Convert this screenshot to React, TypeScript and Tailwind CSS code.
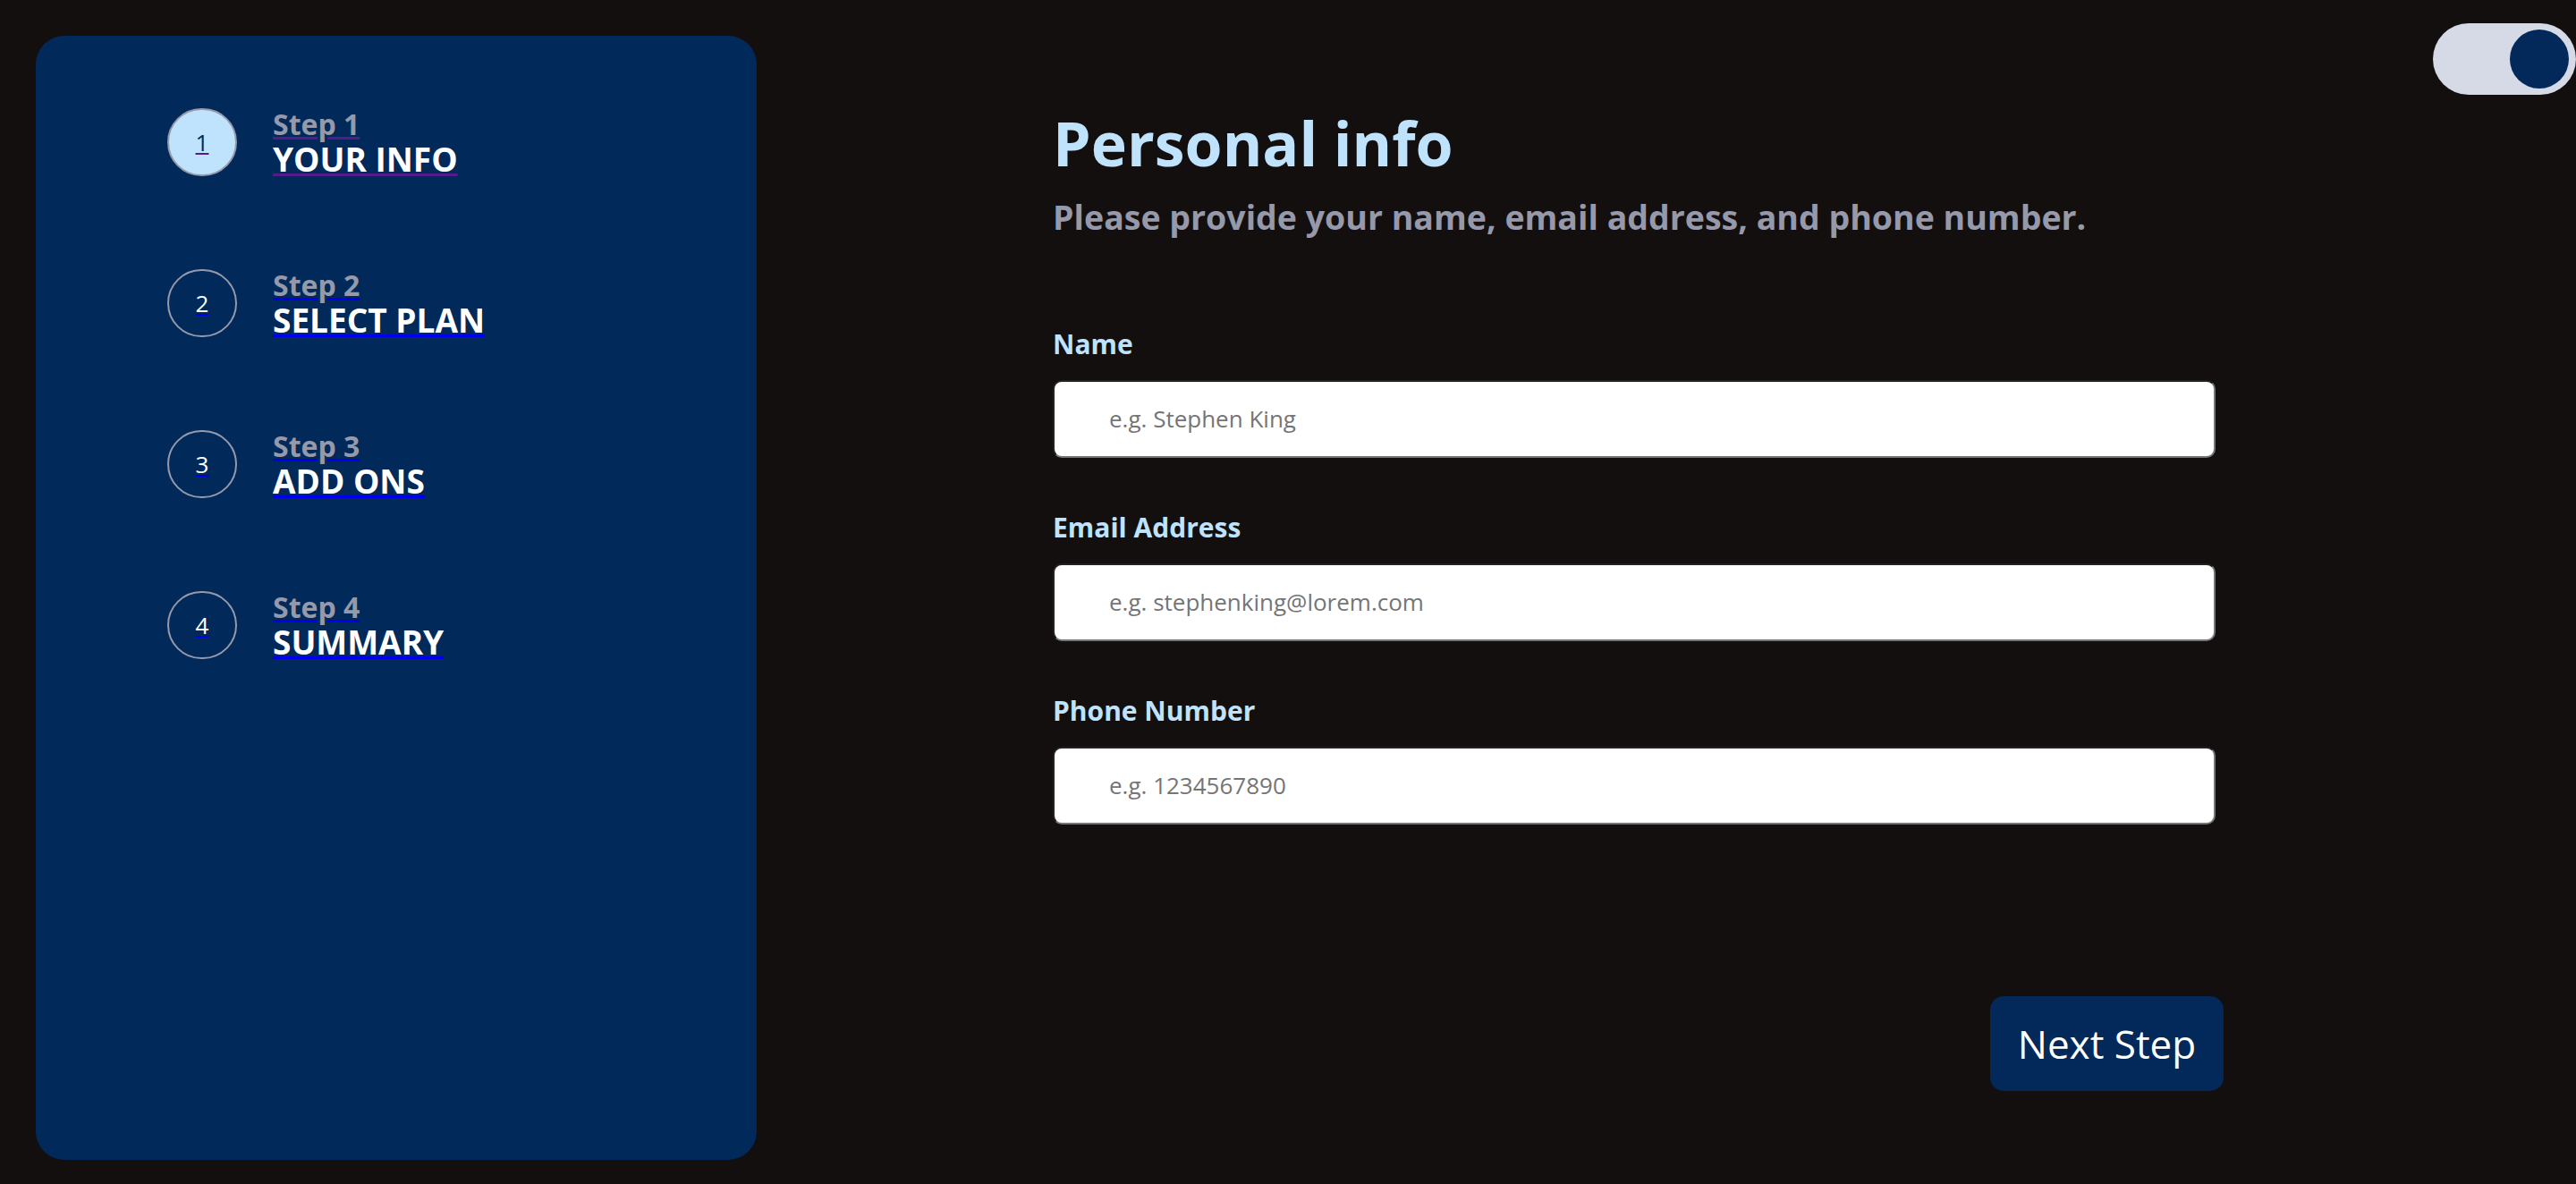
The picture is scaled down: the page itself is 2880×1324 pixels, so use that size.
import React from "react";

const steps = [
  { n: 1, label: "Step 1", title: "YOUR INFO", active: true },
  { n: 2, label: "Step 2", title: "SELECT PLAN", active: false },
  { n: 3, label: "Step 3", title: "ADD ONS", active: false },
  { n: 4, label: "Step 4", title: "SUMMARY", active: false },
];

function Field({ label, placeholder, type }: { label: string; placeholder: string; type: string }) {
  return (
    <div className="flex flex-col">
      <label className="text-[30px] leading-none font-bold text-[#bfe2fd]">{label}</label>
      <input
        type={type}
        placeholder={placeholder}
        className="mt-[25px] w-[1300px] h-[87px] rounded-[10px] bg-white border-2 border-[#767676] [border-style:inset] pl-[61px] text-[26px] text-black placeholder:text-[#757575] outline-none"
      />
    </div>
  );
}

export default function App() {
  return (
    <div
      className="relative h-[1324px] w-full bg-[#130f0f] flex pl-[40px] pt-[40px] pb-[27px] overflow-hidden"
      style={{ fontFamily: '"Open Sans", "Noto Sans", sans-serif' }}
    >
      <aside className="w-[806px] h-full rounded-[32px] bg-[#012a5a] pt-[80px] pl-[147px] flex flex-col gap-[102px]">
        {steps.map((s) => (
          <a
            key={s.n}
            href="#"
            className={`flex items-center gap-[40px] underline ${s.active ? "text-[#551a8b]" : "text-[#0000ee]"}`}
          >
            <span
              className={`w-[78px] h-[76px] rounded-full border-2 border-[#9699aa] flex items-center justify-center text-[26px] ${
                s.active ? "bg-[#bfe2fd]" : ""
              }`}
            >
              <span className={s.active ? "text-[#022959]" : "text-white"}>{s.n}</span>
            </span>
            <span className="flex flex-col">
              <span className="text-[32px] leading-[38px] font-bold text-[#9699aa]">{s.label}</span>
              <span className="text-[37px] leading-[40px] font-bold text-white">{s.title}</span>
            </span>
          </a>
        ))}
      </aside>

      <main className="ml-[331px] w-[1309px] pt-[86px] flex flex-col">
        <h1 className="text-[68px] leading-none font-bold text-[#bfe2fd]">Personal info</h1>
        <p className="mt-[30px] text-[37.5px] leading-none font-bold text-[#9699aa]">
          Please provide your name, email address, and phone number.
        </p>
        <div className="mt-[108px] flex flex-col gap-[63px]">
          <Field label="Name" placeholder="e.g. Stephen King" type="text" />
          <Field label="Email Address" placeholder="e.g. stephenking@lorem.com" type="email" />
          <Field label="Phone Number" placeholder="e.g. 1234567890" type="tel" />
        </div>
        <button className="mt-[192px] self-end w-[261px] h-[106px] rounded-[15px] bg-[#022959] text-white text-[44px]">
          Next Step
        </button>
      </main>

      <div className="absolute top-[26px] right-0 w-[160px] h-[80px] rounded-full bg-[#d6d9e6] flex items-center justify-end pr-[8px]">
        <div className="w-[66px] h-[66px] rounded-full bg-[#022959]" />
      </div>
    </div>
  );
}
